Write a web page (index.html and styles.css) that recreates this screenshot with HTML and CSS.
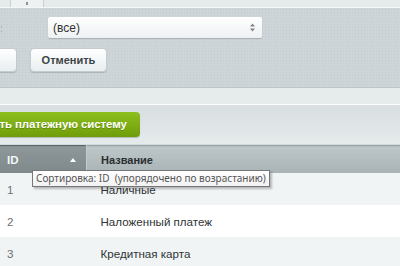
FILE: index.html
```html
<!DOCTYPE html>
<html lang="ru">
<head>
  <meta charset="UTF-8">
  <title>Платежные системы</title>
  <link rel="stylesheet" href="styles.css">
</head>
<body>

<div class="tabs">
  <span class="tab tab-prev"></span>
  <span class="tab tab-current"><span class="tab-mark"></span></span>
</div>

<div class="filter">
  <div class="filter-row">
    <label class="filter-label">Активность:</label>
    <div class="select">
      <span>(все)</span>
      <svg class="select-arrows" width="7" height="9" viewBox="0 0 7 9">
        <path d="M3.5 0.5 L6 3.5 H1 Z" fill="#7d8588"/>
        <path d="M3.5 8.5 L6 5.5 H1 Z" fill="#7d8588"/>
      </svg>
    </div>
  </div>
  <div class="filter-buttons">
    <button class="btn btn-find">Найти</button>
    <button class="btn btn-cancel">Отменить</button>
  </div>
</div>

<div class="toolbar">
  <a class="btn-green">Добавить платежную систему</a>
</div>

<div class="grid-wrap">
  <table class="grid">
    <thead>
      <tr>
        <th class="col-id sorted">ID<span class="sort-arrow"></span></th>
        <th>Название</th>
      </tr>
    </thead>
    <tbody>
      <tr><td class="col-id">1</td><td>Наличные</td></tr>
      <tr><td class="col-id">2</td><td>Наложенный платеж</td></tr>
      <tr><td class="col-id">3</td><td>Кредитная карта</td></tr>
    </tbody>
  </table>
  <div class="tooltip">Сортировка: ID&nbsp; (упорядочено по возрастанию)</div>
</div>

</body>
</html>
```

FILE: styles.css
```css
body {
  margin: 0;
  width: 400px;
  height: 266px;
  overflow: hidden;
  font-family: "Liberation Sans", Arial, sans-serif;
  font-size: 11px;
  color: #2f3436;
  background: #e6ebec;
}

.tabs {
  height: 7px;
  background: #e5eaeb;
  border-bottom: 1px solid #f4f7f7;
  display: flex;
}
.tab {
  display: block;
  height: 7px;
}
.tab-prev {
  width: 10px;
  border-right: 1px solid #c9d1d4;
}
.tab-current {
  width: 32px;
  background: #eef1f2;
  border-right: 1px solid #c9d1d4;
  position: relative;
}
.tab-mark {
  position: absolute;
  left: 15px;
  top: 2px;
  width: 2px;
  height: 3px;
  background: #8a9294;
}

.filter {
  background-color: #cdd5d8;
  background-image: radial-gradient(#c2cbcf 35%, transparent 40%);
  background-size: 3px 3px;
  padding: 9px 0 15px;
  border-bottom: 1px solid #bcc5c8;
}
.filter-row {
  display: flex;
  align-items: center;
  gap: 45px;
  margin-left: -117px;
}
.filter-label {
  width: 120px;
  text-align: right;
  color: #a3abae;
}
.select {
  width: 214px;
  height: 21px;
  box-sizing: border-box;
  display: flex;
  align-items: center;
  justify-content: space-between;
  padding: 0 6px 0 5px;
  font-size: 12px;
  background: linear-gradient(#ffffff, #eef1f2);
  border-radius: 2px;
  box-shadow: 0 1px 1px rgba(0,0,0,0.18);
  color: #333;
}
.select-arrows {
  display: block;
}

.filter-buttons {
  display: flex;
  gap: 13px;
  margin-top: 10px;
  margin-left: -63px;
}
.btn {
  height: 24px;
  padding: 0;
  font-family: inherit;
  font-size: 11px;
  font-weight: bold;
  color: #3b4446;
  background: linear-gradient(#ffffff, #e9eef0);
  border: 1px solid #c4ccce;
  border-radius: 4px;
  box-shadow: 0 1px 1px rgba(0,0,0,0.15);
}
.btn-find {
  width: 80px;
}
.btn-cancel {
  width: 77px;
}

.toolbar {
  height: 57px;
  box-sizing: border-box;
  padding-top: 24px;
  background: linear-gradient(#e6ebec 0, #e6ebec 16px, #ffffff 16px, #ffffff 17px, #d8dfe1 17px, #e5eaeb 56px);
  border-bottom: 1px solid #d2d9db;
}
.btn-green {
  display: inline-block;
  height: 25px;
  line-height: 25px;
  padding: 0 13px 0 14px;
  margin-left: -57px;
  font-size: 11.5px;
  font-weight: bold;
  letter-spacing: -0.1px;
  color: #fff;
  background: linear-gradient(#8dbf1e, #6f9d0a);
  border-radius: 4px;
  box-shadow: 0 1px 1px rgba(0,0,0,0.2);
  text-shadow: 0 1px 0 rgba(60,90,0,0.4);
}

.grid-wrap {
  position: relative;
}
.grid {
  width: 100%;
  border-collapse: collapse;
}
.grid th {
  height: 27px;
  padding: 0 14px;
  text-align: left;
  font-weight: bold;
  color: #2a2e30;
  background: linear-gradient(#bdc6c9, #a9b3b6);
  border-top: 1px solid #9aa4a7;
}
.grid th.col-id {
  width: 65px;
  padding: 0 14px 0 7px;
  font-size: 11.5px;
  color: #f4f6f6;
  background: linear-gradient(#8d9699, #7f898c);
  border-top: 1px solid #5d6669;
  border-right: 1px solid #c3cbcd;
  position: relative;
}
.sort-arrow {
  position: absolute;
  left: 70px;
  top: 12px;
  width: 0;
  height: 0;
  border-left: 3px solid transparent;
  border-right: 3px solid transparent;
  border-bottom: 4px solid #fff;
}
.grid td {
  height: 32px;
  padding: 0 14px;
  font-size: 11.6px;
  color: #2f3436;
}
.grid td.col-id {
  padding-left: 7px;
  color: #6a7274;
}
.grid tbody tr:nth-child(odd) {
  background: #f1f4f5;
}
.grid tbody tr:nth-child(even) {
  background: #ffffff;
}

.tooltip {
  position: absolute;
  left: 32px;
  top: 25px;
  padding: 0 3px;
  line-height: 15px;
  font-family: "Noto Sans", sans-serif;
  font-size: 10px;
  color: #555;
  background: linear-gradient(#ffffff, #f2f2f2);
  border: 1px solid #767676;
  box-shadow: 2px 2px 2px rgba(0,0,0,0.25);
  white-space: nowrap;
}
```
